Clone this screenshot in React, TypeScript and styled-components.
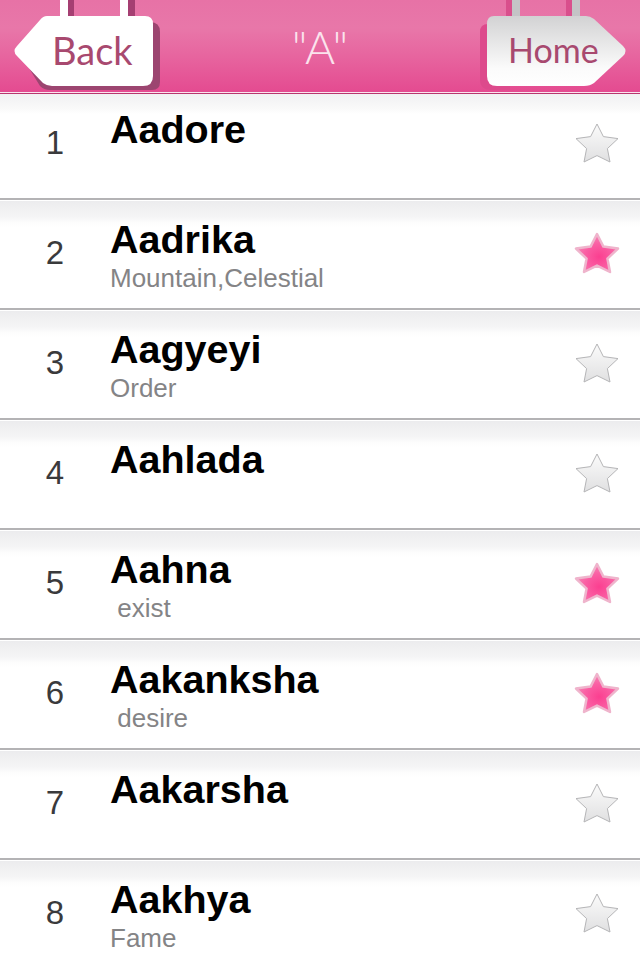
import React from "react";
import styled, { createGlobalStyle } from "styled-components";

const GlobalStyle = createGlobalStyle`
  html, body {
    margin: 0;
    padding: 0;
    background: #fff;
    font-family: "Liberation Sans", Arial, sans-serif;
  }
`;

const Page = styled.div`
  width: 640px;
  height: 960px;
  overflow: hidden;
  background: #fff;
`;

const Header = styled.header`
  position: relative;
  height: 94px;
  box-sizing: border-box;
  display: flex;
  align-items: flex-start;
  justify-content: space-between;
  padding: 0 14px 0 14px;
  background: linear-gradient(180deg, #e772a6 0%, #e877a9 30%, #e7659f 60%, #e44a90 100%);
  border-bottom: 1px solid #b8366f;
  box-shadow: inset 0 -1px 0 #fbe4ee;
`;

const Title = styled.h1`
  margin: 22px 0 0;
  font-family: "Lato", sans-serif;
  font-size: 46px;
  line-height: 50px;
  font-weight: 300;
  color: #fbe3ed;
`;

const Sign = styled.a`
  position: relative;
  display: block;
  width: 146px;
  height: 92px;
`;

const SignShape = styled.svg`
  position: absolute;
  top: 0;
  left: 0;
  width: 146px;
  height: 92px;
`;

const SignLabel = styled.span<{ $left: number; $size: number }>`
  position: absolute;
  top: 30px;
  left: ${(p) => p.$left}px;
  font-family: "Lato", sans-serif;
  font-size: ${(p) => p.$size}px;
  line-height: 40px;
  font-weight: 400;
  color: #a8496f;
`;

const List = styled.ul`
  list-style: none;
  margin: 0;
  padding: 0;
`;

const Row = styled.li`
  height: 110px;
  box-sizing: border-box;
  display: grid;
  grid-template-columns: 110px 1fr 66px;
  padding-top: 18px;
  background: linear-gradient(180deg, #ececee 0, #f5f5f6 16px, #fdfdfd 22px, #fff 26px);
  border-bottom: 2px solid #b4b3b5;
  border-top: 1px solid #fff;

  &:first-child {
    height: 106px;
    padding-top: 15px;
    border-top: 0;
    background: linear-gradient(180deg, #f1f1f2 0, #f9f9f9 14px, #fff 20px);
  }
`;

const Num = styled.div`
  padding-top: 14px;
  text-align: center;
  font-size: 33px;
  line-height: 40px;
  color: #3a3a3c;
`;

const Texts = styled.div`
  display: flex;
  flex-direction: column;
`;

const Name = styled.div`
  font-size: 39.5px;
  line-height: 40px;
  font-weight: 700;
  color: #000;
`;

const Meaning = styled.div`
  margin-top: 4px;
  font-size: 26px;
  line-height: 30px;
  color: #848486;
  white-space: pre;
`;

const StarIcon = styled.svg`
  display: block;
  width: 46px;
  height: 46px;
  margin-top: 12px;
`;

interface NameRow {
  name: string;
  meaning?: string;
  fav?: boolean;
}

const rows: NameRow[] = [
  { name: "Aadore" },
  { name: "Aadrika", meaning: "Mountain,Celestial", fav: true },
  { name: "Aagyeyi", meaning: "Order" },
  { name: "Aahlada" },
  { name: "Aahna", meaning: " exist", fav: true },
  { name: "Aakanksha", meaning: " desire", fav: true },
  { name: "Aakarsha" },
  { name: "Aakhya", meaning: "Fame" },
];

const STAR =
  "M23 3 L29.4 15.6 L44 17.6 L33.4 27.6 L36 41 L23 34.6 L10 41 L12.6 27.6 L2 17.6 L16.6 15.6 Z";

const Star: React.FC<{ fav?: boolean }> = ({ fav }) => (
  <StarIcon viewBox="0 0 46 46">
    <defs>
      <linearGradient id="starOff" x1="0" y1="0" x2="0" y2="1">
        <stop offset="0" stopColor="#fbfbfb" />
        <stop offset="1" stopColor="#e0e0e1" />
      </linearGradient>
      <radialGradient id="starOn" cx="0.55" cy="0.6" r="0.6">
        <stop offset="0" stopColor="#fb3f90" />
        <stop offset="0.55" stopColor="#fa5ea3" />
        <stop offset="1" stopColor="#f586b6" />
      </radialGradient>
    </defs>
    <path
      d={STAR}
      fill={fav ? "url(#starOn)" : "url(#starOff)"}
      stroke={fav ? "#efb4cc" : "#b5b5b7"}
      strokeWidth={fav ? 2.5 : 1}
      strokeLinejoin="round"
    />
  </StarIcon>
);

const App: React.FC = () => (
  <Page>
    <GlobalStyle />
    <Header>
      <Sign>
        <SignShape viewBox="0 0 146 92">
          <rect x="46" y="0" width="8" height="18" fill="#fff" />
          <rect x="54" y="0" width="6" height="18" fill="#a53f72" />
          <rect x="106" y="0" width="8" height="18" fill="#fff" />
          <rect x="114" y="0" width="7" height="18" fill="#a53f72" />
          <path
            d="M36 22 H136 Q146 22 146 32 V82 Q146 90 138 90 H36 Q30 90 26 86 L10 60 Q6 55 10 50 L30 26 Q32 22 36 22 Z"
            fill="#9c4570"
          />
          <path
            d="M33 16 H131 Q139 16 139 24 V76 Q139 86 129 86 H38 Q33 86 29 83 L3 56 Q-2 51 3 46 L26 20 Q29 16 33 16 Z"
            fill="#fff"
          />
        </SignShape>
        <SignLabel $left={38} $size={38}>Back</SignLabel>
      </Sign>
      <Title>"A"</Title>
      <Sign>
        <SignShape viewBox="0 0 146 92">
          <defs>
            <linearGradient id="homeFill" x1="0" y1="0" x2="0" y2="1">
              <stop offset="0" stopColor="#d2d2d3" />
              <stop offset="0.75" stopColor="#fbfbfb" />
              <stop offset="1" stopColor="#fff" />
            </linearGradient>
          </defs>
          <rect x="32" y="0" width="8" height="18" fill="#c4c4c6" />
          <rect x="26" y="0" width="6" height="18" fill="#d94f8c" />
          <rect x="92" y="0" width="8" height="18" fill="#c4c4c6" />
          <rect x="86" y="0" width="6" height="18" fill="#d94f8c" />
          <path d="M8 24 H30 V90 H12 Q0 90 0 80 V32 Q0 24 8 24 Z" fill="#dd4a8c" />
          <path
            d="M14 16 H106 Q110 16 114 19 L143 46 Q148 51 143 56 L114 83 Q110 86 104 86 H17 Q7 86 7 76 V24 Q7 16 14 16 Z"
            fill="url(#homeFill)"
          />
        </SignShape>
        <SignLabel $left={28} $size={34}>Home</SignLabel>
      </Sign>
    </Header>
    <List>
      {rows.map((r, i) => (
        <Row key={r.name}>
          <Num>{i + 1}</Num>
          <Texts>
            <Name>{r.name}</Name>
            {r.meaning && <Meaning>{r.meaning}</Meaning>}
          </Texts>
          <Star fav={r.fav} />
        </Row>
      ))}
    </List>
  </Page>
);

export default App;
